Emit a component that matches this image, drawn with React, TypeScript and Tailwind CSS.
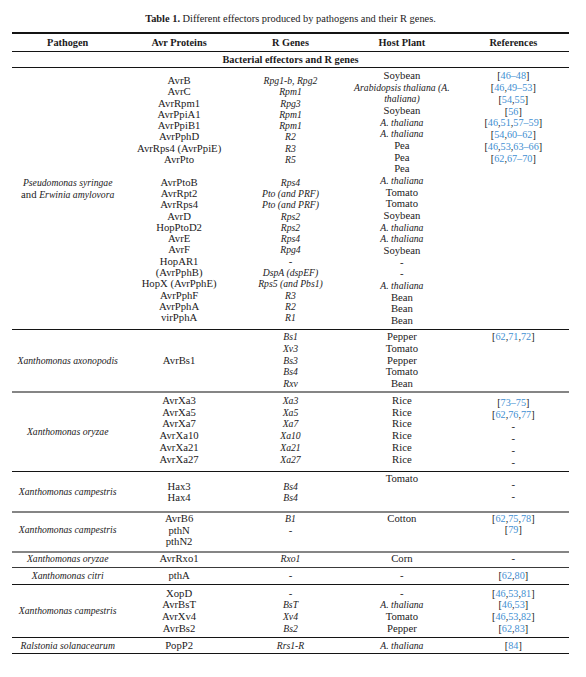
import React from "react";

type Line = React.ReactNode;
type Cell = { lines: Line[]; cls: string };
type Section = { h: string; cells: Cell[]; rule: string };

const It = ({ children }: { children: React.ReactNode }) => (
  <span className="italic text-[9.7px] leading-none">{children}</span>
);

function Refs({ items }: { items: string[] }) {
  return (
    <span className="text-[10.2px] leading-none">
      [
      {items.map((it, i) => (
        <React.Fragment key={i}>
          {i > 0 && ","}
          <span className="text-[#3f8fd2]">{it}</span>
        </React.Fragment>
      ))}
      ]
    </span>
  );
}

const NB = "\u00a0";
const AT = <It>A. thaliana</It>;

const BLACK = "h-px bg-[#141414]";
const GRAY = "h-[2px] bg-[#858585]";

const sections: Section[] = [
  {
    h: "h-[261px]",
    rule: BLACK,
    cells: [
      {
        cls: "justify-start pt-[109px] leading-[11.5px]",
        lines: [
          <It>Pseudomonas syringae</It>,
          <>
            and <It>Erwinia amylovora</It>
          </>,
        ],
      },
      {
        cls: "justify-start pt-[7px] leading-[11.3px]",
        lines: [
          "AvrB",
          "AvrC",
          "AvrRpm1",
          "AvrPpiA1",
          "AvrPpiB1",
          "AvrPphD",
          "AvrRps4 (AvrPpiE)",
          "AvrPto",
          NB,
          "AvrPtoB",
          "AvrRpt2",
          "AvrRps4",
          "AvrD",
          "HopPtoD2",
          "AvrE",
          "AvrF",
          "HopAR1",
          "(AvrPphB)",
          "HopX (AvrPphE)",
          "AvrPphF",
          "AvrPphA",
          "virPphA",
        ],
      },
      {
        cls: "justify-start pt-[7px] leading-[11.3px]",
        lines: [
          <It>Rpg1-b, Rpg2</It>,
          <It>Rpm1</It>,
          <It>Rpg3</It>,
          <It>Rpm1</It>,
          <It>Rpm1</It>,
          <It>R2</It>,
          <It>R3</It>,
          <It>R5</It>,
          NB,
          <It>Rps4</It>,
          <It>Pto (and PRF)</It>,
          <It>Pto (and PRF)</It>,
          <It>Rps2</It>,
          <It>Rps2</It>,
          <It>Rps4</It>,
          <It>Rpg4</It>,
          "-",
          <It>DspA (dspEF)</It>,
          <It>Rps5 (and Pbs1)</It>,
          <It>R3</It>,
          <It>R2</It>,
          <It>R1</It>,
        ],
      },
      {
        cls: "justify-start pt-[2px] leading-[11.67px]",
        lines: [
          "Soybean",
          <It>Arabidopsis thaliana (A.</It>,
          <It>thaliana)</It>,
          "Soybean",
          AT,
          AT,
          "Pea",
          "Pea",
          "Pea",
          AT,
          "Tomato",
          "Tomato",
          "Soybean",
          AT,
          AT,
          "Soybean",
          "-",
          "-",
          AT,
          "Bean",
          "Bean",
          "Bean",
        ],
      },
      {
        cls: "justify-start pt-[2px] leading-[11.86px]",
        lines: [
          <Refs items={["46–48"]} />,
          <Refs items={["46", "49–53"]} />,
          <Refs items={["54", "55"]} />,
          <Refs items={["56"]} />,
          <Refs items={["46", "51", "57–59"]} />,
          <Refs items={["54", "60–62"]} />,
          <Refs items={["46", "53", "63–66"]} />,
          <Refs items={["62", "67–70"]} />,
        ],
      },
    ],
  },
  {
    h: "h-[61px]",
    rule: GRAY,
    cells: [
      { cls: "justify-center leading-[11.75px]", lines: [<It>Xanthomonas axonopodis</It>] },
      { cls: "justify-center leading-[11.75px]", lines: ["AvrBs1"] },
      {
        cls: "justify-center leading-[11.75px]",
        lines: [<It>Bs1</It>, <It>Xv3</It>, <It>Bs3</It>, <It>Bs4</It>, <It>Rxv</It>],
      },
      {
        cls: "justify-center leading-[11.75px]",
        lines: ["Pepper", "Tomato", "Pepper", "Tomato", "Bean"],
      },
      { cls: "justify-start pt-[1px] leading-[11.75px]", lines: [<Refs items={["62", "71", "72"]} />] },
    ],
  },
  {
    h: "h-[78px]",
    rule: BLACK,
    cells: [
      { cls: "justify-center leading-[11.7px]", lines: [<It>Xanthomonas oryzae</It>] },
      {
        cls: "justify-start pt-[2px] leading-[11.7px]",
        lines: ["AvrXa3", "AvrXa5", "AvrXa7", "AvrXa10", "AvrXa21", "AvrXa27"],
      },
      {
        cls: "justify-start pt-[2px] leading-[11.7px]",
        lines: [<It>Xa3</It>, <It>Xa5</It>, <It>Xa7</It>, <It>Xa10</It>, <It>Xa21</It>, <It>Xa27</It>],
      },
      {
        cls: "justify-start pt-[2px] leading-[11.7px]",
        lines: ["Rice", "Rice", "Rice", "Rice", "Rice", "Rice"],
      },
      {
        cls: "justify-start pt-[3px] leading-[12px]",
        lines: [<Refs items={["73–75"]} />, <Refs items={["62", "76", "77"]} />, "-", "-", "-", "-"],
      },
    ],
  },
  {
    h: "h-[39px]",
    rule: GRAY,
    cells: [
      { cls: "justify-center leading-[11.7px]", lines: [<It>Xanthomonas campestris</It>] },
      { cls: "justify-center leading-[11px]", lines: ["Hax3", "Hax4"] },
      { cls: "justify-center leading-[11px]", lines: [<It>Bs4</It>, <It>Bs4</It>] },
      { cls: "justify-start pt-[1px] leading-[11.7px]", lines: ["Tomato"] },
      { cls: "justify-start pt-[6px] leading-[12px]", lines: ["-", "-"] },
    ],
  },
  {
    h: "h-[38px]",
    rule: GRAY,
    cells: [
      { cls: "justify-center pb-[4px] leading-[11.7px]", lines: [<It>Xanthomonas campestris</It>] },
      { cls: "justify-start leading-[11.5px]", lines: ["AvrB6", "pthN", "pthN2"] },
      { cls: "justify-start leading-[11.5px]", lines: [<It>B1</It>, "-"] },
      { cls: "justify-start leading-[11.5px]", lines: ["Cotton"] },
      {
        cls: "justify-start leading-[11.3px]",
        lines: [<Refs items={["62", "75", "78"]} />, <Refs items={["79"]} />],
      },
    ],
  },
  {
    h: "h-[14px]",
    rule: "h-px bg-[#3a3a3a]",
    cells: [
      { cls: "justify-center pb-[3px] leading-[11.7px]", lines: [<It>Xanthomonas oryzae</It>] },
      { cls: "justify-center pb-[3px] leading-[11.7px]", lines: ["AvrRxo1"] },
      { cls: "justify-center pb-[3px] leading-[11.7px]", lines: [<It>Rxo1</It>] },
      { cls: "justify-center pb-[3px] leading-[11.7px]", lines: ["Corn"] },
      { cls: "justify-center pb-[3px] leading-[11.7px]", lines: ["-"] },
    ],
  },
  {
    h: "h-[16px]",
    rule: BLACK,
    cells: [
      { cls: "justify-center leading-[11.7px]", lines: [<It>Xanthomonas citri</It>] },
      { cls: "justify-center leading-[11.7px]", lines: ["pthA"] },
      { cls: "justify-center leading-[11.7px]", lines: ["-"] },
      { cls: "justify-center leading-[11.7px]", lines: ["-"] },
      { cls: "justify-center leading-[11.7px]", lines: [<Refs items={["62", "80"]} />] },
    ],
  },
  {
    h: "h-[52px]",
    rule: BLACK,
    cells: [
      { cls: "justify-center leading-[11.7px]", lines: [<It>Xanthomonas campestris</It>] },
      { cls: "justify-center leading-[11.7px]", lines: ["XopD", "AvrBsT", "AvrXv4", "AvrBs2"] },
      { cls: "justify-center leading-[11.7px]", lines: ["-", <It>BsT</It>, <It>Xv4</It>, <It>Bs2</It>] },
      { cls: "justify-center leading-[11.7px]", lines: ["-", AT, "Tomato", "Pepper"] },
      {
        cls: "justify-center leading-[11.7px]",
        lines: [
          <Refs items={["46", "53", "81"]} />,
          <Refs items={["46", "53"]} />,
          <Refs items={["46", "53", "82"]} />,
          <Refs items={["62", "83"]} />,
        ],
      },
    ],
  },
  {
    h: "h-[15px]",
    rule: BLACK,
    cells: [
      { cls: "justify-center leading-[11.7px]", lines: [<It>Ralstonia solanacearum</It>] },
      { cls: "justify-center leading-[11.7px]", lines: ["PopP2"] },
      { cls: "justify-center leading-[11.7px]", lines: [<It>Rrs1-R</It>] },
      { cls: "justify-center leading-[11.7px]", lines: [AT] },
      { cls: "justify-center leading-[11.7px]", lines: [<Refs items={["84"]} />] },
    ],
  },
];

function CellView({ cell }: { cell: Cell }) {
  return (
    <div className={`flex flex-col items-center ${cell.cls}`}>
      {cell.lines.map((l, i) => (
        <div key={i} className="whitespace-nowrap text-center">
          {l}
        </div>
      ))}
    </div>
  );
}

export default function App() {
  return (
    <div className="w-[586px] h-[677px] bg-white text-[#1c1a1b] font-['Liberation_Serif',serif] text-[10.7px] overflow-hidden">
      <div className="ml-[12px] w-[557px] flex flex-col">
        <div className="h-[32px] pt-[12px] leading-[14px] text-center text-[10.4px] whitespace-nowrap">
          <span className="font-bold">Table 1.</span> Different effectors produced by pathogens and their R genes.
        </div>
        <div className="h-[2px] bg-[#141414]" />
        <div className="h-[17px] grid grid-cols-5 items-center font-bold text-[10.3px] leading-[12px]">
          <div className="text-center">Pathogen</div>
          <div className="text-center">Avr Proteins</div>
          <div className="text-center">R Genes</div>
          <div className="text-center">Host Plant</div>
          <div className="text-center">References</div>
        </div>
        <div className={BLACK} />
        <div className="h-[15px] flex items-center justify-center font-bold text-[10.3px] leading-[12px]">
          Bacterial effectors and R genes
        </div>
        <div className={BLACK} />
        {sections.map((s, si) => (
          <React.Fragment key={si}>
            <div className={`${s.h} grid grid-cols-5`}>
              {s.cells.map((c, ci) => (
                <CellView key={ci} cell={c} />
              ))}
            </div>
            <div className={s.rule} />
          </React.Fragment>
        ))}
      </div>
    </div>
  );
}
